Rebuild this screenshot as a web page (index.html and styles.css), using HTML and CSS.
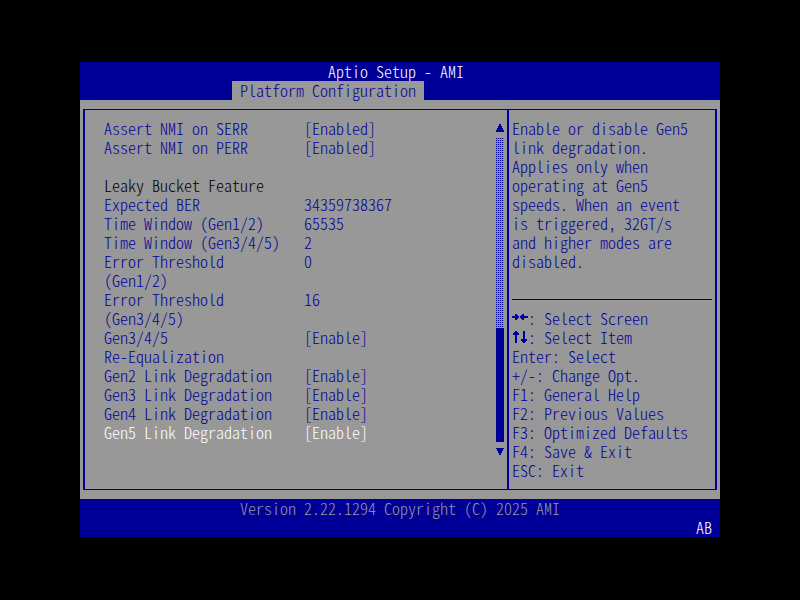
FILE: index.html
```html
<!DOCTYPE html>
<html lang="en">

<head>
    <meta charset="utf-8">
    <title>Aptio Setup - AMI</title>
    <link rel="stylesheet" href="styles.css">
</head>

<body>
    <div class="screen">
        <header class="top">
            <h1 class="title">Aptio Setup - AMI</h1>
            <nav class="tabs">
                <a class="tab" href="#platform">Platform Configuration</a>
            </nav>
        </header>

        <main class="work" id="platform">
            <div class="frame">
                <form class="options" name="setup">
                    <div class="row">
                        <label for="serr">Assert NMI on SERR</label>
                        <select class="value" id="serr"><option>[Enabled]</option><option>[Disabled]</option></select>
                    </div>
                    <div class="row">
                        <label for="perr">Assert NMI on PERR</label>
                        <select class="value" id="perr"><option>[Enabled]</option><option>[Disabled]</option></select>
                    </div>
                    <h2 class="group">Leaky Bucket Feature</h2>
                    <div class="row">
                        <label for="ber">Expected BER</label>
                        <input class="value" type="text" id="ber" value="34359738367">
                    </div>
                    <div class="row">
                        <label for="window12">Time Window (Gen1/2)</label>
                        <input class="value" type="text" id="window12" value="65535">
                    </div>
                    <div class="row">
                        <label for="window345">Time Window (Gen3/4/5)</label>
                        <input class="value" type="text" id="window345" value="2">
                    </div>
                    <div class="row">
                        <label for="error12">Error Threshold<br>(Gen1/2)</label>
                        <input class="value" type="text" id="error12" value="0">
                    </div>
                    <div class="row">
                        <label for="error345">Error Threshold<br>(Gen3/4/5)</label>
                        <input class="value" type="text" id="error345" value="16">
                    </div>
                    <div class="row">
                        <label for="reeq">Gen3/4/5<br>Re-Equalization</label>
                        <select class="value" id="reeq"><option>[Enable]</option><option>[Disable]</option></select>
                    </div>
                    <div class="row">
                        <label for="gen2">Gen2 Link Degradation</label>
                        <select class="value" id="gen2"><option>[Enable]</option><option>[Disable]</option></select>
                    </div>
                    <div class="row">
                        <label for="gen3">Gen3 Link Degradation</label>
                        <select class="value" id="gen3"><option>[Enable]</option><option>[Disable]</option></select>
                    </div>
                    <div class="row">
                        <label for="gen4">Gen4 Link Degradation</label>
                        <select class="value" id="gen4"><option>[Enable]</option><option>[Disable]</option></select>
                    </div>
                    <div class="row selected">
                        <label for="gen5">Gen5 Link Degradation</label>
                        <select class="value" id="gen5"><option>[Enable]</option><option>[Disable]</option></select>
                    </div>
                </form>

                <div class="scroll">
                    <svg class="arrow" viewBox="0 0 8 19"><path d="M3 5h2v2h1v2h1v2h1v2H0v-2h1V9h1V7h1z"/></svg>
                    <div class="track"></div>
                    <div class="thumb"></div>
                    <svg class="arrow" viewBox="0 0 8 19"><path d="M0 6h8v1H7v2H6v2H5v2H3v-2H2V9H1V7H0z"/></svg>
                </div>

                <aside class="help">
                    <p class="info">Enable or disable Gen5 link degradation. Applies only when operating at Gen5 speeds. When an event is triggered, 32GT/s and higher modes are disabled.</p>
                    <hr class="line">
                    <ul class="keys">
                        <li><svg class="icon" viewBox="0 0 16 19"><path d="M0 7h3V5h2v1h1v1h1v2H6v1H5v1H3V9H0zM16 7h-4V5h-2v1H9v1H8v2h1v1h1v1h2V9h4z"/></svg>: Select Screen</li>
                        <li><svg class="icon" viewBox="0 0 16 19"><path d="M3 3h2v1h1v1h1v2H5v8H3V7H1V5h1V4h1zM11 3h2v8h2v2h-1v1h-1v1h-2v-1h-1v-1H9v-2h2z"/></svg>: Select Item</li>
                        <li>Enter: Select</li>
                        <li>+/-: Change Opt.</li>
                        <li>F1: General Help</li>
                        <li>F2: Previous Values</li>
                        <li>F3: Optimized Defaults</li>
                        <li>F4: Save &amp; Exit</li>
                        <li>ESC: Exit</li>
                    </ul>
                </aside>
            </div>
        </main>

        <footer class="bottom">
            <p class="version">Version 2.22.1294 Copyright (C) 2025 AMI</p>
            <p class="code">AB</p>
        </footer>
    </div>
</body>

</html>
```
FILE: styles.css
```css
* {
    box-sizing: border-box;
    margin: 0;
    padding: 0;
}

body {
    background: #000;
    padding: 62px 10%;
}

body, select, input {
    font: normal 300 16px/19px "Noto Sans CJK JP", monospace;
    font-feature-settings: "hwid", "liga" 0;
    color: #000098;
}

h1, h2 {
    font: inherit;
    font-feature-settings: inherit;
}

svg {
    display: block;
    fill: #000098;
}

.top, .bottom {
    background: #000098;
}

.title {
    color: #fff;
    text-align: center;
    padding-right: 8px;
}

.tabs {
    display: flex;
    padding-left: 152px;
}

.tab {
    background: #989898;
    color: #000098;
    padding: 0 8px;
    text-decoration: none;
}

.work {
    background: #989898;
    padding: 9px 3px;
}

.frame {
    display: grid;
    grid-template-columns: 1fr 8px 208px;
    column-gap: 3px;
    border: solid #000098;
    border-width: 1px 2px;
}

/* list of setup items */
.options {
    padding: 9px 0 9px 19px;
}

.row {
    display: grid;
    grid-template-columns: 200px 1fr;
    align-items: start;
}

.group {
    color: #000;
    padding-top: 19px;
}

.value {
    -webkit-appearance: none;
    appearance: none;
    width: 100%;
    height: 19px;
    border: none;
    outline: none;
    background: none;
}

.selected label, .selected .value {
    color: #fff;
}

/* scroll bar */
.scroll {
    display: flex;
    flex-direction: column;
    padding: 9px 0 28px;
}

.arrow {
    width: 8px;
    height: 19px;
}

.track {
    flex: 5;
    background:
        repeating-linear-gradient(transparent 0 1px, #989898 1px 2px),
        repeating-linear-gradient(90deg, #000098 0 1px, #7878a0 1px 2px);
}

.thumb {
    flex: 3;
    background: #000098;
}

/* right side */
.help {
    border-left: 2px solid #000098;
    padding: 9px 3px;
}

.info {
    min-height: 171px;
    padding-right: 16px;
}

.line {
    border: none;
    border-top: 1px solid #000098;
    margin: 9px 0;
}

.keys {
    list-style: none;
}

.keys li {
    display: flex;
    white-space: pre;
}

.icon {
    width: 16px;
    height: 19px;
}

.bottom {
    color: #989898;
}

.version {
    text-align: center;
}

.code {
    color: #fff;
    text-align: right;
    padding-right: 8px;
}
```
